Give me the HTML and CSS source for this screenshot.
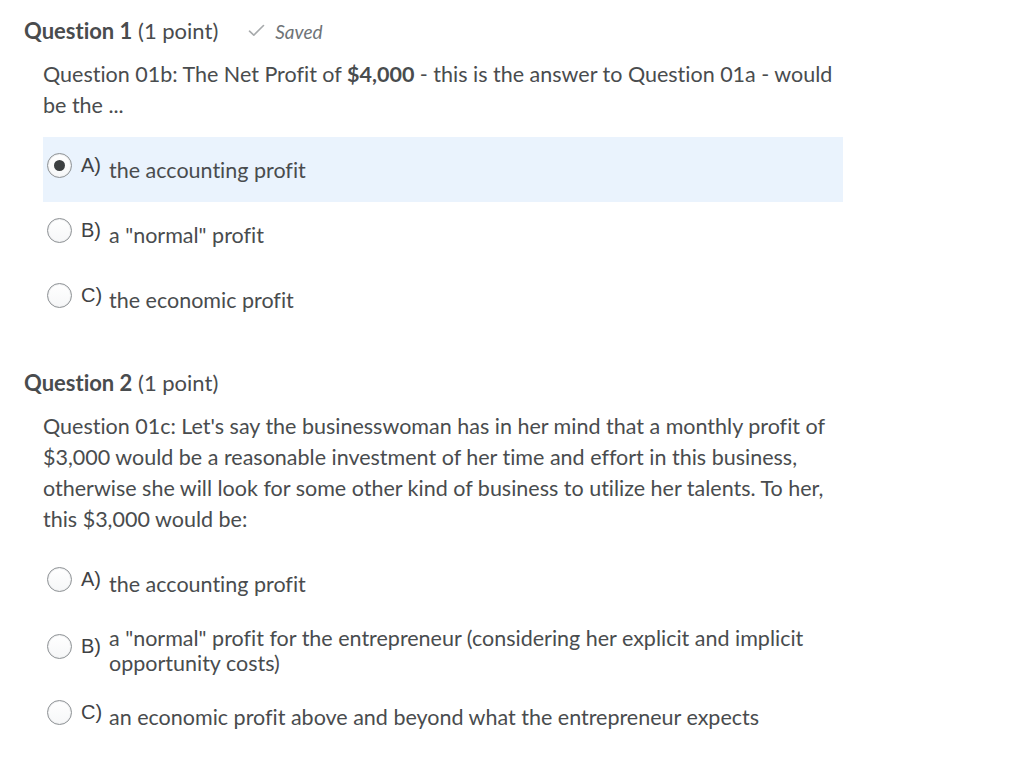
FILE: index.html
```html
<!DOCTYPE html>
<html lang="en">
<head>
<meta charset="utf-8">
<title>Quiz</title>
<link rel="stylesheet" href="styles.css">
</head>
<body>
<main class="quiz">
  <section class="question q1">
    <header class="q-header">
      <h2 class="q-title"><strong>Question 1</strong> (1 point)</h2>
      <span class="saved">
        <svg class="check" width="17" height="13" viewBox="0 0 17 13"><path d="M1.5 7.2 L5.8 11.2 L15.5 1.5" fill="none" stroke="#a7aaac" stroke-width="1.6" stroke-linecap="round" stroke-linejoin="round"/></svg>
        <em>Saved</em>
      </span>
    </header>
    <p class="q-text">Question 01b: The Net Profit of <strong>$4,000</strong> - this is the answer to Question 01a - would be the ...</p>
    <ul class="options">
      <li class="option selected"><span class="mark"><span class="radio checked"></span><span class="letter">A)</span></span><span class="answer">the accounting profit</span></li>
      <li class="option"><span class="mark"><span class="radio"></span><span class="letter">B)</span></span><span class="answer">a "normal" profit</span></li>
      <li class="option"><span class="mark"><span class="radio"></span><span class="letter">C)</span></span><span class="answer">the economic profit</span></li>
    </ul>
  </section>
  <section class="question q2">
    <header class="q-header">
      <h2 class="q-title"><strong>Question 2</strong> (1 point)</h2>
    </header>
    <p class="q-text">Question 01c: Let's say the businesswoman has in her mind that a monthly profit of $3,000 would be a reasonable investment of her time and effort in this business, otherwise she will look for some other kind of business to utilize her talents. To her, this $3,000 would be:</p>
    <ul class="options">
      <li class="option"><span class="mark"><span class="radio"></span><span class="letter">A)</span></span><span class="answer">the accounting profit</span></li>
      <li class="option"><span class="mark"><span class="radio"></span><span class="letter">B)</span></span><span class="answer">a "normal" profit for the entrepreneur (considering her explicit and implicit opportunity costs)</span></li>
      <li class="option"><span class="mark"><span class="radio"></span><span class="letter">C)</span></span><span class="answer">an economic profit above and beyond what the entrepreneur expects</span></li>
    </ul>
  </section>
</main>
</body>
</html>
```

FILE: styles.css
```css
* { box-sizing: border-box; }
html, body { margin: 0; padding: 0; background: #ffffff; }
body {
  font-family: Lato, "Open Sans", "Liberation Sans", sans-serif;
  font-variant-ligatures: none;
  color: #494c4e;
}
.quiz {
  padding: 19px 0 0 24px;
  width: 870px;
}
.question.q2 { margin-top: 39px; }
.q-header {
  display: flex;
  align-items: center;
  height: 24px;
}
.q-title {
  margin: 0;
  font-size: 22px;
  font-weight: 400;
  line-height: 24px;
  color: #494c4e;
}
.q-title strong { font-weight: 700; }
.saved {
  display: flex;
  align-items: center;
  margin-left: 30px;
  font-size: 19px;
  color: #6e7376;
}
.saved .check { margin-right: 10px; margin-top: -2px; }
.saved em { font-style: italic; }
.q-text {
  margin: 16px 0 0 19px;
  font-size: 21.5px;
  line-height: 31px;
  width: 800px;
  color: #494c4e;
}
.q-text strong { font-weight: 700; }
.options {
  list-style: none;
  margin: 16px 0 0 19px;
  padding: 0;
  width: 800px;
}
.option {
  display: flex;
  align-items: center;
  min-height: 65px;
  padding: 8px 0;
}
.option.selected { background: #eaf3fd; }
.mark {
  display: flex;
  align-items: center;
  flex: none;
  margin-bottom: 8px;
}
.radio {
  width: 25px;
  height: 25px;
  border-radius: 50%;
  border: 1px solid #8d9194;
  background: linear-gradient(#ffffff, #f6f7f8);
  margin-left: 4px;
  display: flex;
  align-items: center;
  justify-content: center;
  box-shadow: inset 0 0 0 1px #f0f1f2;
}
.radio.checked::after {
  content: "";
  width: 11px;
  height: 11px;
  border-radius: 50%;
  background: #3c3f41;
}
.letter {
  font-family: "Liberation Sans", Arial, sans-serif;
  font-size: 20px;
  color: #3f4244;
  margin-left: 9px;
  width: 28px;
}
.answer {
  font-size: 21.5px;
  line-height: 25px;
  color: #494c4e;
  max-width: 700px;
  margin-top: 2px;
}
```
